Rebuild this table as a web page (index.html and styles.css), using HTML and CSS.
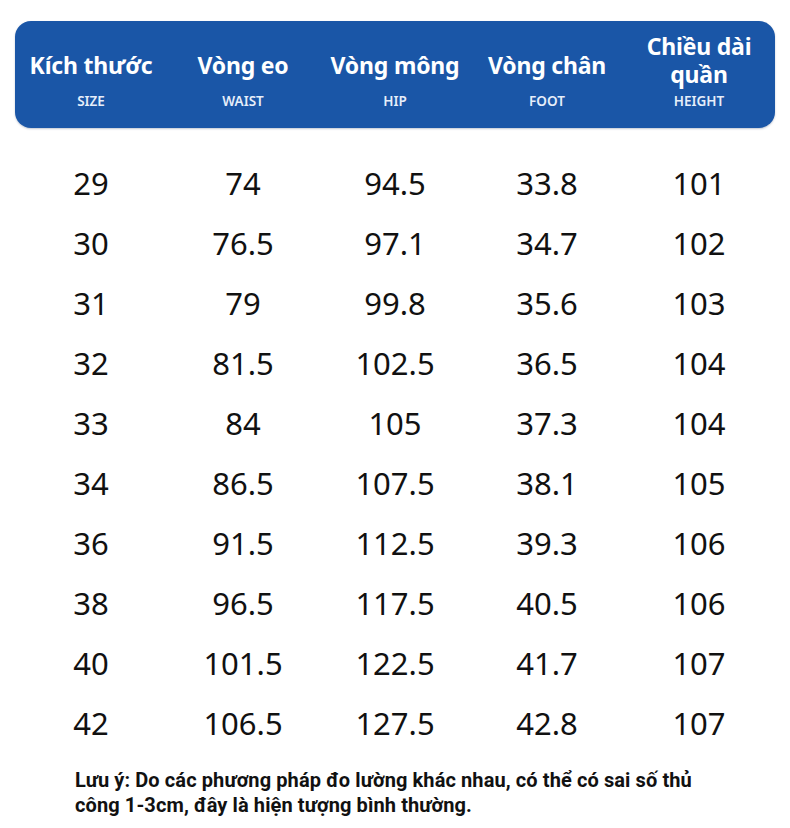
FILE: index.html
```html
<!DOCTYPE html>
<html lang="vi">
<head>
<meta charset="utf-8">
<title>Bảng kích thước</title>
<link rel="stylesheet" href="styles.css">
</head>
<body>
<div class="page">
  <div class="head">
    <div class="hcell"><div class="title">Kích thước</div><div class="sub">SIZE</div></div>
    <div class="hcell"><div class="title">Vòng eo</div><div class="sub">WAIST</div></div>
    <div class="hcell"><div class="title">Vòng mông</div><div class="sub">HIP</div></div>
    <div class="hcell"><div class="title">Vòng chân</div><div class="sub">FOOT</div></div>
    <div class="hcell hcell-tall"><div class="title"><div class="tline">Chiều dài</div><div class="tline">quần</div></div><div class="sub">HEIGHT</div></div>
  </div>
  <div class="rows">
    <div class="row"><span>29</span><span>74</span><span>94.5</span><span>33.8</span><span>101</span></div>
    <div class="row"><span>30</span><span>76.5</span><span>97.1</span><span>34.7</span><span>102</span></div>
    <div class="row"><span>31</span><span>79</span><span>99.8</span><span>35.6</span><span>103</span></div>
    <div class="row"><span>32</span><span>81.5</span><span>102.5</span><span>36.5</span><span>104</span></div>
    <div class="row"><span>33</span><span>84</span><span>105</span><span>37.3</span><span>104</span></div>
    <div class="row"><span>34</span><span>86.5</span><span>107.5</span><span>38.1</span><span>105</span></div>
    <div class="row"><span>36</span><span>91.5</span><span>112.5</span><span>39.3</span><span>106</span></div>
    <div class="row"><span>38</span><span>96.5</span><span>117.5</span><span>40.5</span><span>106</span></div>
    <div class="row"><span>40</span><span>101.5</span><span>122.5</span><span>41.7</span><span>107</span></div>
    <div class="row"><span>42</span><span>106.5</span><span>127.5</span><span>42.8</span><span>107</span></div>
  </div>
  <p class="note">Lưu ý: Do các phương pháp đo lường khác nhau, có thể có sai số thủ<br>công 1-3cm, đây là hiện tượng bình thường.</p>
</div>
</body>
</html>
```

FILE: styles.css
```css
html, body {
  margin: 0;
  padding: 0;
  background: #ffffff;
}
.page {
  width: 790px;
  padding: 21px 15px 0 15px;
  box-sizing: border-box;
  font-family: "Noto Sans", "Noto Sans CJK SC", sans-serif;
  color: #111111;
}
.head {
  display: grid;
  grid-template-columns: repeat(5, 152px);
  align-items: end;
  background: #1a56a7;
  border-radius: 16px;
  padding: 11px 0 19px 0;
  color: #ffffff;
  box-shadow: 0 1px 2px rgba(0, 30, 80, 0.25);
}
.hcell {
  display: flex;
  flex-direction: column;
  align-items: center;
  text-align: center;
}
.title {
  font-size: 23px;
  font-weight: 700;
  line-height: 28px;
  letter-spacing: -0.2px;
}
.tline {
  height: 28px;
}
.sub {
  font-size: 13.5px;
  font-weight: 600;
  line-height: 16px;
  margin-top: 14px;
  color: #e6eefa;
}
.hcell-tall .sub {
  margin-top: 5px;
}
.rows {
  margin-top: 25px;
}
.row {
  display: grid;
  grid-template-columns: repeat(5, 152px);
  height: 60px;
  line-height: 60px;
  font-size: 31px;
  text-align: center;
}
.note {
  margin: 15px 0 0 60px;
  font-family: Roboto, "Liberation Sans", sans-serif;
  font-weight: 700;
  font-size: 20px;
  line-height: 25px;
  letter-spacing: 0.1px;
  color: #111111;
}
```
